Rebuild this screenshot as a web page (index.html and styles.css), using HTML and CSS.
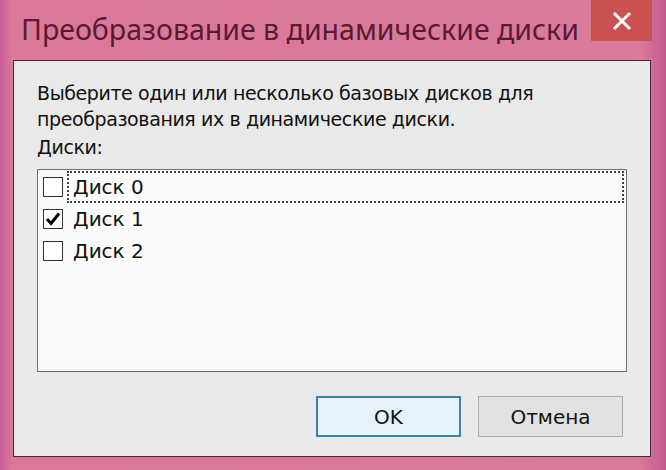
FILE: index.html
```html
<!DOCTYPE html>
<html lang="ru">
<head>
<meta charset="utf-8">
<link rel="stylesheet" href="styles.css">
</head>
<body>
<div class="window">
  <div class="titlebar">
    <div class="title">Преобразование в динамические диски</div>
    <div class="close">
      <svg width="20" height="20" viewBox="0 0 20 20"><path d="M3 3 L17 17 M17 3 L3 17" stroke="#fff" stroke-width="3" stroke-linecap="square"/></svg>
    </div>
  </div>
  <div class="client">
    <p class="intro">Выберите один или несколько базовых дисков для<br>преобразования их в динамические диски.</p>
    <div class="label">Диски:</div>
    <div class="listbox">
      <div class="item">
        <span class="check"></span>
        <span class="name focus">Диск 0</span>
      </div>
      <div class="item">
        <span class="check">
          <svg width="18" height="18" viewBox="0 0 18 18"><path d="M3 9 L7 13.5 L15 3.5" fill="none" stroke="#000" stroke-width="3"/></svg>
        </span>
        <span class="name">Диск 1</span>
      </div>
      <div class="item">
        <span class="check"></span>
        <span class="name">Диск 2</span>
      </div>
    </div>
    <div class="buttons">
      <button class="btn default">OK</button>
      <button class="btn">Отмена</button>
    </div>
  </div>
</div>
</body>
</html>
```

FILE: styles.css
```css
html, body {
  margin: 0;
  padding: 0;
}
body {
  width: 666px;
  height: 470px;
  overflow: hidden;
  background: #d97898;
}
.window {
  width: 666px;
  height: 470px;
  background: linear-gradient(90deg, #c8609a 0px, #d97898 12px, #da7a9a 640px, #c25c8e 666px);
  display: flex;
  flex-direction: column;
}
.titlebar {
  height: 60px;
  display: flex;
  align-items: flex-start;
  justify-content: space-between;
}
.title {
  font-family: "Noto Sans", sans-serif;
  font-size: 28.5px;
  line-height: 34px;
  color: #5a1a34;
  padding: 12px 0 0 21px;
  white-space: nowrap;
}
.close {
  width: 61px;
  height: 41px;
  margin-right: 14px;
  background: #c9514f;
  display: flex;
  align-items: center;
  justify-content: center;
}
.client {
  margin-left: 13px;
  width: 613px;
  height: 395px;
  border: 1px solid #4a2a38;
  background: #e9e9e9;
  font-family: "DejaVu Sans", sans-serif;
  font-size: 19px;
  color: #111;
  padding-left: 23px;
  box-sizing: content-box;
}
.intro {
  margin: 0;
  padding-top: 19px;
  line-height: 26px;
  letter-spacing: -0.4px;
}
.label {
  margin-top: 1px;
  line-height: 28px;
  letter-spacing: -0.4px;
}
.listbox {
  margin-top: 8px;
  width: 588px;
  height: 200px;
  border: 1px solid #707070;
  background: #fafafa;
  padding-top: 1px;
}
.item {
  height: 32px;
  display: flex;
  align-items: center;
  padding-left: 5px;
}
.check {
  width: 18px;
  height: 18px;
  border: 1px solid #333;
  background: #fff;
  display: flex;
  align-items: center;
  justify-content: center;
}
.name {
  margin-left: 4px;
  padding-left: 5px;
  flex: 1;
  font-size: 20px;
  line-height: 30px;
  border: 1px solid transparent;
}
.name.focus {
  border: 2px dotted #444;
  margin-right: 2px;
  padding-left: 4px;
  line-height: 28px;
}
.buttons {
  display: flex;
  justify-content: flex-end;
  gap: 17px;
  margin-top: 24px;
  padding-right: 27px;
}
.btn {
  width: 145px;
  height: 41px;
  font-family: "DejaVu Sans", sans-serif;
  font-size: 20px;
  color: #111;
  border: 1px solid #adadad;
  background: #e1e1e1;
  padding: 0;
}
.btn.default {
  border: 2px solid #3c7fb1;
  background: #e5f1fb;
}
```
